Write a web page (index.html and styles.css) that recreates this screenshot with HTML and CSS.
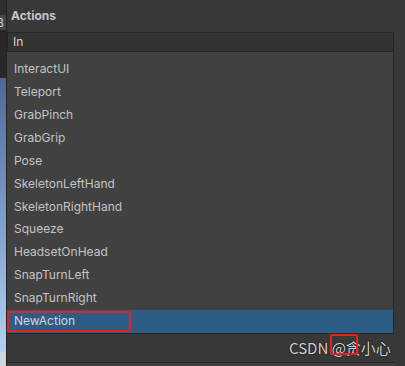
FILE: index.html
```html
<!DOCTYPE html>
<html>
<head>
<meta charset="utf-8">
<link rel="stylesheet" href="styles.css">
</head>
<body>
<div class="screen">
  <div class="side">
    <div class="side-top"></div>
    <div class="side-tab"><span>B</span></div>
    <div class="side-dark"></div>
    <div class="side-sky"></div>
    <div class="side-bottom"></div>
  </div>
  <div class="popup">
    <div class="title">Actions</div>
    <div class="search">In</div>
    <div class="list">
      <div class="item">InteractUI</div>
      <div class="item">Teleport</div>
      <div class="item">GrabPinch</div>
      <div class="item">GrabGrip</div>
      <div class="item">Pose</div>
      <div class="item">SkeletonLeftHand</div>
      <div class="item">SkeletonRightHand</div>
      <div class="item">Squeeze</div>
      <div class="item">HeadsetOnHead</div>
      <div class="item">SnapTurnLeft</div>
      <div class="item">SnapTurnRight</div>
      <div class="item selected">NewAction<span class="mark mark-item"></span></div>
    </div>
    <div class="footer"></div>
    <div class="bottom-line"></div>
  </div>
  <div class="watermark">CSDN @贪小心</div>
  <div class="mark mark-add"></div>
</div>
</body>
</html>
```
FILE: styles.css
```css
* { box-sizing: border-box; }
html, body { margin: 0; padding: 0; }
body {
  width: 405px;
  height: 366px;
  overflow: hidden;
  background: #383838;
  font-family: Inter, "Noto Sans", "Liberation Sans", sans-serif;
}
.screen {
  position: relative;
  display: flex;
  width: 405px;
  height: 366px;
}
.side {
  width: 7px;
  display: flex;
  flex-direction: column;
  border-right: 1px solid #222;
  overflow: hidden;
}
.side-top { height: 15px; background: #2e2e2e; }
.side-tab {
  height: 15px;
  background: #474747;
  color: #d0d0d0;
  font-size: 12px;
  line-height: 15px;
  overflow: hidden;
}
.side-tab span { display: block; margin-left: -4px; }
.side-dark { height: 48px; background: #282828; }
.side-sky {
  flex: 1;
  background: linear-gradient(#4d6897, #7c9ccb 50%, #b2d2f2);
}
.side-bottom { height: 14px; background: #c9d7e0; }
.popup {
  flex: 1;
  display: flex;
  flex-direction: column;
  padding-right: 11px;
  background: #383838;
}
.title {
  height: 32px;
  padding-left: 4px;
  line-height: 31px;
  font-size: 12px;
  font-weight: 700;
  color: #c6c6c6;
}
.search {
  height: 20px;
  background: #333333;
  border: 1px solid #262626;
  border-bottom-color: #232323;
  border-radius: 2px 2px 0 0;
  padding-left: 5px;
  line-height: 18px;
  font-size: 12px;
  color: #d2d2d2;
}
.list {
  height: 282px;
  background: #414141;
  border-right: 1px solid #262626;
  border-bottom: 1px solid #262626;
  padding-top: 6px;
  display: flex;
  flex-direction: column;
}
.item {
  position: relative;
  height: 23px;
  line-height: 22px;
  padding-left: 7px;
  font-size: 12px;
  color: #c4c4c4;
}
.item.selected {
  background: #2c5d87;
  color: #d6d6d6;
}
.footer {
  flex: 1;
  background: #383838;
}
.bottom-line {
  height: 4px;
  border-top: 1px solid #262626;
  background: #3e3e3e;
}
.mark {
  position: absolute;
  border: 2px solid #e8211c;
  border-radius: 2px;
}
.mark-item {
  left: 0;
  top: 1px;
  width: 124px;
  height: 21px;
}
.mark-add {
  left: 330px;
  top: 334px;
  width: 28px;
  height: 21px;
}
.watermark {
  position: absolute;
  left: 289px;
  top: 338px;
  font-family: "Noto Sans CJK SC", "Liberation Sans", sans-serif;
  font-size: 15px;
  line-height: 20px;
  color: rgba(240, 240, 240, 0.9);
  text-shadow: 0 0 1px #000, 0 0 1px #000;
  white-space: nowrap;
}
```
